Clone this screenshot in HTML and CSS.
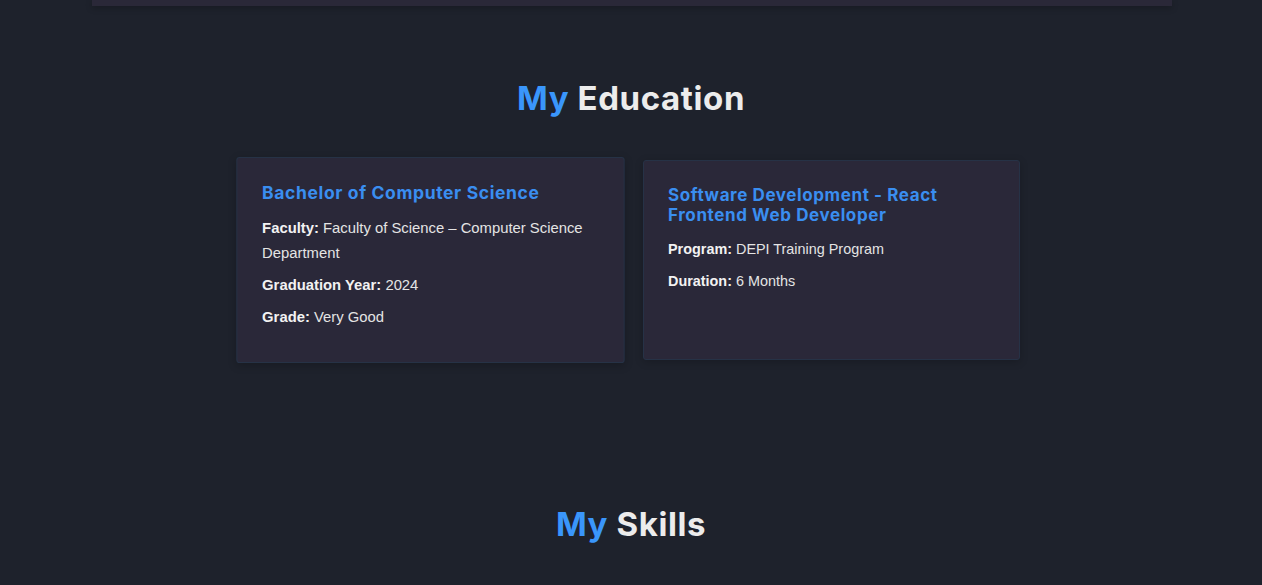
FILE: index.html
```html
<!DOCTYPE html>
<html lang="en">
<head>
<meta charset="utf-8">
<title>Education</title>
<link rel="stylesheet" href="styles.css">
</head>
<body>
<div class="top-strip"></div>
<section class="section education">
  <h2 class="section-title"><span class="accent">My</span> Education</h2>
  <div class="edu-grid">
    <article class="edu-card hovered">
      <h3 class="edu-title">Bachelor of Computer Science</h3>
      <p><strong>Faculty:</strong> Faculty of Science – Computer Science Department</p>
      <p><strong>Graduation Year:</strong> 2024</p>
      <p><strong>Grade:</strong> Very Good</p>
    </article>
    <article class="edu-card">
      <h3 class="edu-title">Software Development - React Frontend Web Developer</h3>
      <p><strong>Program:</strong> DEPI Training Program</p>
      <p><strong>Duration:</strong> 6 Months</p>
    </article>
  </div>
</section>
<section class="section skills">
  <h2 class="section-title"><span class="accent">My</span> Skills</h2>
</section>
</body>
</html>
```
FILE: styles.css
```css
* { box-sizing: border-box; }
html, body { margin: 0; padding: 0; }
body {
  background: #1e222c;
  color: #e6e6e6;
  font-family: "Liberation Sans", Arial, sans-serif;
  overflow: hidden;
  height: 585px;
}
.top-strip {
  width: 1080px;
  height: 6px;
  margin: 0 auto;
  position: relative;
  left: 1px;
  background: #2a2838;
  box-shadow: 0 2px 6px rgba(0,0,0,0.25);
}
.section { display: flex; flex-direction: column; align-items: center; }
.education { padding-top: 72px; }
.section-title {
  margin: 0;
  font-family: Inter, "Open Sans", sans-serif;
  font-weight: 700;
  font-size: 33px;
  line-height: 40px;
  color: #ececec;
  letter-spacing: 0.6px;
}
.accent { color: #3a96fb; }
.edu-grid {
  margin-top: 42px;
  display: grid;
  grid-template-columns: 377px 377px;
  gap: 24px;
}
.edu-card {
  height: 200px;
  background: #2a2839;
  border: 1px solid #263246;
  border-radius: 3px;
  padding: 24px 24px;
  box-shadow: 0 2px 8px rgba(0,0,0,0.2);
}
.edu-card.hovered { transform: scale(1.03); }
.edu-title {
  margin: 0 0 12px;
  font-family: Inter, "Open Sans", sans-serif;
  font-weight: 700;
  font-size: 17px;
  line-height: 20px;
  color: #3a8ef0;
  letter-spacing: 0.6px;
}
.edu-card.hovered .edu-title { margin-bottom: 13px; }
.edu-card p {
  margin: 0 0 8px;
  font-size: 14.4px;
  line-height: 24px;
  color: #e4e4e4;
}
.edu-card.hovered p { margin-bottom: 7.5px; line-height: 23.5px; }
.edu-card strong { color: #f2f2f2; }
.skills { padding-top: 144px; }
```
